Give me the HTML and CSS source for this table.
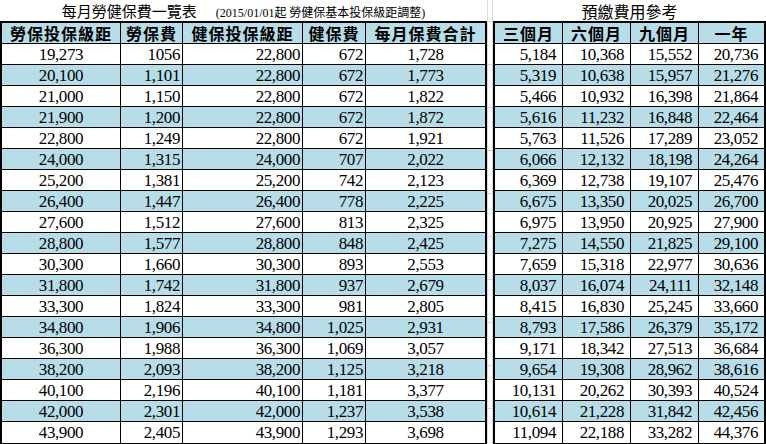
FILE: index.html
```html
<!DOCTYPE html>
<html lang="zh-Hant">
<head>
<meta charset="utf-8">
<title>每月勞健保費一覽表</title>
<link rel="stylesheet" href="styles.css">
</head>
<body>
<div class="sheet">
  <section class="block block-left">
    <div class="title">每月勞健保費一覽表<span class="note"><span class="num">(2015/01/01</span>起 勞健保基本投保級距調整<span class="num">)</span></span></div>
    <div class="grid grid-left">
      <div class="row head"><div class="cell">勞保投保級距</div><div class="cell">勞保費</div><div class="cell">健保投保級距</div><div class="cell">健保費</div><div class="cell">每月保費合計</div></div>
      <div class="row"><div class="cell c">19,273</div><div class="cell r">1056</div><div class="cell r">22,800</div><div class="cell r">672</div><div class="cell c">1,728</div></div>
      <div class="row alt"><div class="cell c">20,100</div><div class="cell r">1,101</div><div class="cell r">22,800</div><div class="cell r">672</div><div class="cell c">1,773</div></div>
      <div class="row"><div class="cell c">21,000</div><div class="cell r">1,150</div><div class="cell r">22,800</div><div class="cell r">672</div><div class="cell c">1,822</div></div>
      <div class="row alt"><div class="cell c">21,900</div><div class="cell r">1,200</div><div class="cell r">22,800</div><div class="cell r">672</div><div class="cell c">1,872</div></div>
      <div class="row"><div class="cell c">22,800</div><div class="cell r">1,249</div><div class="cell r">22,800</div><div class="cell r">672</div><div class="cell c">1,921</div></div>
      <div class="row alt"><div class="cell c">24,000</div><div class="cell r">1,315</div><div class="cell r">24,000</div><div class="cell r">707</div><div class="cell c">2,022</div></div>
      <div class="row"><div class="cell c">25,200</div><div class="cell r">1,381</div><div class="cell r">25,200</div><div class="cell r">742</div><div class="cell c">2,123</div></div>
      <div class="row alt"><div class="cell c">26,400</div><div class="cell r">1,447</div><div class="cell r">26,400</div><div class="cell r">778</div><div class="cell c">2,225</div></div>
      <div class="row"><div class="cell c">27,600</div><div class="cell r">1,512</div><div class="cell r">27,600</div><div class="cell r">813</div><div class="cell c">2,325</div></div>
      <div class="row alt"><div class="cell c">28,800</div><div class="cell r">1,577</div><div class="cell r">28,800</div><div class="cell r">848</div><div class="cell c">2,425</div></div>
      <div class="row"><div class="cell c">30,300</div><div class="cell r">1,660</div><div class="cell r">30,300</div><div class="cell r">893</div><div class="cell c">2,553</div></div>
      <div class="row alt"><div class="cell c">31,800</div><div class="cell r">1,742</div><div class="cell r">31,800</div><div class="cell r">937</div><div class="cell c">2,679</div></div>
      <div class="row"><div class="cell c">33,300</div><div class="cell r">1,824</div><div class="cell r">33,300</div><div class="cell r">981</div><div class="cell c">2,805</div></div>
      <div class="row alt"><div class="cell c">34,800</div><div class="cell r">1,906</div><div class="cell r">34,800</div><div class="cell r">1,025</div><div class="cell c">2,931</div></div>
      <div class="row"><div class="cell c">36,300</div><div class="cell r">1,988</div><div class="cell r">36,300</div><div class="cell r">1,069</div><div class="cell c">3,057</div></div>
      <div class="row alt"><div class="cell c">38,200</div><div class="cell r">2,093</div><div class="cell r">38,200</div><div class="cell r">1,125</div><div class="cell c">3,218</div></div>
      <div class="row"><div class="cell c">40,100</div><div class="cell r">2,196</div><div class="cell r">40,100</div><div class="cell r">1,181</div><div class="cell c">3,377</div></div>
      <div class="row alt"><div class="cell c">42,000</div><div class="cell r">2,301</div><div class="cell r">42,000</div><div class="cell r">1,237</div><div class="cell c">3,538</div></div>
      <div class="row"><div class="cell c">43,900</div><div class="cell r">2,405</div><div class="cell r">43,900</div><div class="cell r">1,293</div><div class="cell c">3,698</div></div>
    </div>
  </section>
  <div class="gap"></div>
  <section class="block block-right">
    <div class="title title-right">預繳費用參考</div>
    <div class="grid grid-right">
      <div class="row head"><div class="cell">三個月</div><div class="cell">六個月</div><div class="cell">九個月</div><div class="cell">一年</div></div>
      <div class="row"><div class="cell r">5,184</div><div class="cell r">10,368</div><div class="cell r">15,552</div><div class="cell r">20,736</div></div>
      <div class="row alt"><div class="cell r">5,319</div><div class="cell r">10,638</div><div class="cell r">15,957</div><div class="cell r">21,276</div></div>
      <div class="row"><div class="cell r">5,466</div><div class="cell r">10,932</div><div class="cell r">16,398</div><div class="cell r">21,864</div></div>
      <div class="row alt"><div class="cell r">5,616</div><div class="cell r">11,232</div><div class="cell r">16,848</div><div class="cell r">22,464</div></div>
      <div class="row"><div class="cell r">5,763</div><div class="cell r">11,526</div><div class="cell r">17,289</div><div class="cell r">23,052</div></div>
      <div class="row alt"><div class="cell r">6,066</div><div class="cell r">12,132</div><div class="cell r">18,198</div><div class="cell r">24,264</div></div>
      <div class="row"><div class="cell r">6,369</div><div class="cell r">12,738</div><div class="cell r">19,107</div><div class="cell r">25,476</div></div>
      <div class="row alt"><div class="cell r">6,675</div><div class="cell r">13,350</div><div class="cell r">20,025</div><div class="cell r">26,700</div></div>
      <div class="row"><div class="cell r">6,975</div><div class="cell r">13,950</div><div class="cell r">20,925</div><div class="cell r">27,900</div></div>
      <div class="row alt"><div class="cell r">7,275</div><div class="cell r">14,550</div><div class="cell r">21,825</div><div class="cell r">29,100</div></div>
      <div class="row"><div class="cell r">7,659</div><div class="cell r">15,318</div><div class="cell r">22,977</div><div class="cell r">30,636</div></div>
      <div class="row alt"><div class="cell r">8,037</div><div class="cell r">16,074</div><div class="cell r">24,111</div><div class="cell r">32,148</div></div>
      <div class="row"><div class="cell r">8,415</div><div class="cell r">16,830</div><div class="cell r">25,245</div><div class="cell r">33,660</div></div>
      <div class="row alt"><div class="cell r">8,793</div><div class="cell r">17,586</div><div class="cell r">26,379</div><div class="cell r">35,172</div></div>
      <div class="row"><div class="cell r">9,171</div><div class="cell r">18,342</div><div class="cell r">27,513</div><div class="cell r">36,684</div></div>
      <div class="row alt"><div class="cell r">9,654</div><div class="cell r">19,308</div><div class="cell r">28,962</div><div class="cell r">38,616</div></div>
      <div class="row"><div class="cell r">10,131</div><div class="cell r">20,262</div><div class="cell r">30,393</div><div class="cell r">40,524</div></div>
      <div class="row alt"><div class="cell r">10,614</div><div class="cell r">21,228</div><div class="cell r">31,842</div><div class="cell r">42,456</div></div>
      <div class="row"><div class="cell r">11,094</div><div class="cell r">22,188</div><div class="cell r">33,282</div><div class="cell r">44,376</div></div>
    </div>
  </section>
</div>
</body>
</html>
```
FILE: styles.css
```css
html, body {
  margin: 0;
  padding: 0;
  background: #ffffff;
}

body {
  width: 766px;
  height: 444px;
  overflow: hidden;
  color: #000;
  font-family: "Liberation Serif", "Noto Sans CJK TC", serif;
}

.sheet {
  display: flex;
  align-items: flex-start;
}

.block-left {
  width: 487px;
  flex: none;
}

.block-right {
  width: 273px;
  flex: none;
}

.gap {
  width: 6px;
  height: 444px;
  flex: none;
  box-sizing: border-box;
  border-left: 1px solid #dadada;
  border-right: 1px solid #dadada;
  background-image: repeating-linear-gradient(to bottom, transparent 0 21px, #dadada 21px 22px, transparent 22px 43px);
}

.title {
  height: 21px;
  box-sizing: border-box;
  padding-top: 2px;
  line-height: 18px;
  text-align: center;
  font-family: "Noto Sans CJK TC", sans-serif;
  font-size: 15px;
  font-weight: 400;
  white-space: nowrap;
}

.title-right {
  font-size: 16px;
}

.note {
  font-size: 12px;
  margin-left: 19px;
}

.num {
  font-family: "Liberation Serif", serif;
}

.grid {
  display: grid;
  border: 2px solid #000;
  grid-auto-rows: 21px;
}

.grid-left {
  grid-template-columns: 119px 62px 120px 63px 1fr;
}

.grid-right {
  grid-template-columns: 68px 68px 68px 1fr;
}

.row {
  display: contents;
}

.cell {
  box-sizing: border-box;
  border-right: 1px solid #000;
  border-bottom: 1px solid #000;
  padding-top: 1px;
  line-height: 19px;
  font-size: 17px;
  letter-spacing: -0.4px;
  white-space: nowrap;
}

.cell:last-child {
  border-right: 0;
}

.row:last-child .cell {
  border-bottom: 0;
}

.head .cell,
.alt .cell {
  background: #b7dde8;
}

.head .cell {
  padding-top: 0;
  line-height: 20px;
  text-align: center;
  font-family: "Noto Sans CJK TC", sans-serif;
  font-weight: 700;
  font-size: 16px;
  letter-spacing: 1px;
}

.c {
  text-align: center;
}

.r {
  text-align: right;
  padding-right: 2px;
}

.grid-right .r {
  padding-right: 6px;
}
```
